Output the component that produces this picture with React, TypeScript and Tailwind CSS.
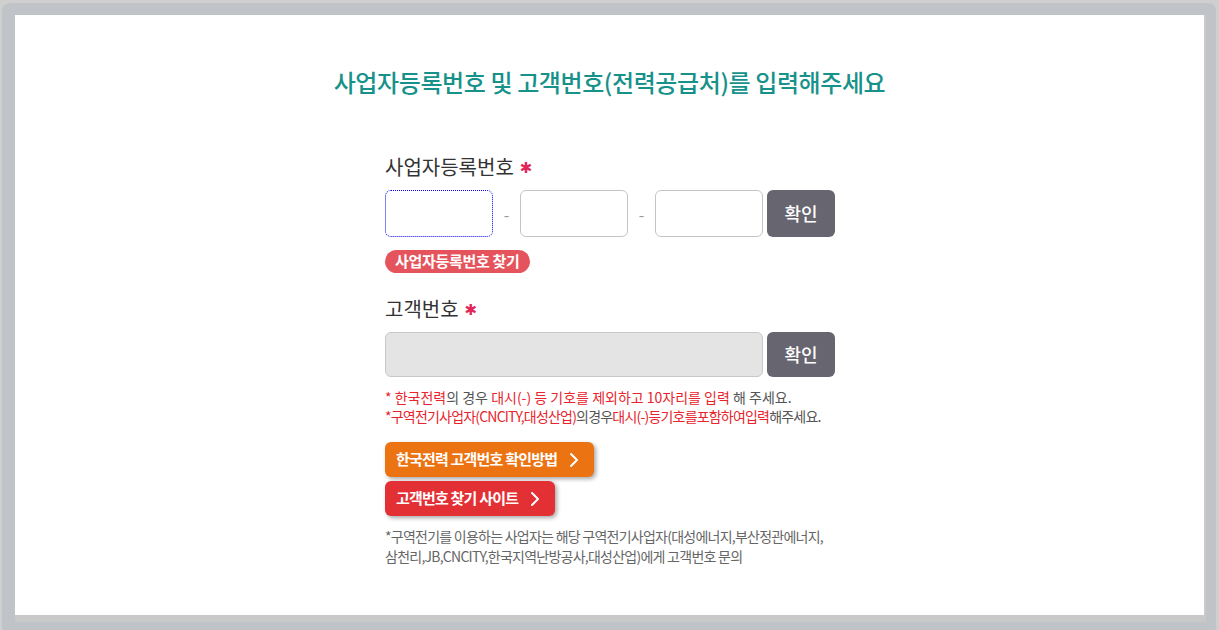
import React from 'react';

const font = { fontFamily: '"Noto Sans CJK KR", "Noto Sans", sans-serif' };

const Star = () => (
  <span className="ml-1.5 mt-[2px] text-[15px] font-bold text-[#e2265a]" style={{ fontFamily: '"DejaVu Sans", sans-serif' }}>
    ✱
  </span>
);

const Chevron = () => (
  <svg width="10" height="16" viewBox="0 0 10 16" className="ml-3">
    <path d="M2 2l6 6-6 6" fill="none" stroke="white" strokeWidth="2" strokeLinecap="round" strokeLinejoin="round" />
  </svg>
);

export default function App() {
  return (
    <div className="h-[630px] w-[1219px] overflow-hidden bg-[#cfcfcf] pl-[2px] pt-[3px] pr-[3px]" style={font}>
      <div className="h-[632px] rounded-lg bg-[#c0c3c7] pl-[13px] pt-[12px] pr-[10px]">
        <div className="h-[607px] border-r-2 border-b-[7px] border-[#c9c9c9] bg-white">
          <h1 className="pt-[49px] text-center text-[24px] leading-[36px] font-medium tracking-[-0.4px] text-[#16928a]">
            사업자등록번호 및 고객번호(전력공급처)를 입력해주세요
          </h1>

          <div className="ml-[370px] mt-[52px] w-[460px]">
            <div className="flex h-[30px] items-center text-[20px] text-[#333]">
              사업자등록번호
              <Star />
            </div>
            <div className="mt-[8px] flex items-center">
              <div className="h-[47px] w-[108px] rounded-md border border-dotted border-[#0000ee]" />
              <span className="w-[27px] text-center text-[#999]">-</span>
              <div className="h-[47px] w-[108px] rounded-md border border-[#c4c4c4]" />
              <span className="w-[27px] text-center text-[#999]">-</span>
              <div className="h-[47px] w-[108px] rounded-md border border-[#c4c4c4]" />
              <button className="ml-[4px] h-[47px] w-[68px] rounded-md bg-[#676570] text-[18px] font-medium text-white">확인</button>
            </div>
            <div className="mt-[13px] flex">
              <span className="inline-flex h-[23px] items-center rounded-full bg-[#e5545c] px-[10px] text-[15px] font-bold tracking-[-0.3px] text-white">
                사업자등록번호 찾기
              </span>
            </div>

            <div className="mt-[21px] flex h-[30px] items-center text-[20px] text-[#333]">
              고객번호
              <Star />
            </div>
            <div className="mt-[8px] flex items-center">
              <div className="h-[45px] w-[378px] rounded-md border border-[#c8c8c8] bg-[#e4e4e4]" />
              <button className="ml-[4px] h-[45px] w-[68px] rounded-md bg-[#676570] text-[18px] font-medium text-white">확인</button>
            </div>

            <div className="mt-[11px] text-[14px] leading-[19px] text-[#555]">
              <p className="tracking-[0px]">
                <span className="text-[#e8242c]">* 한국전력</span>의 경우 <span className="text-[#e8242c]">대시(-) 등 기호를 제외하고 10자리를 입력</span> 해 주세요.
              </p>
              <p className="tracking-[-0.8px]">
                <span className="text-[#e8242c]">*구역전기사업자(CNCITY,대성산업)</span>의경우<span className="text-[#e8242c]">대시(-)등기호를포함하여입력</span>해주세요.
              </p>
            </div>

            <div className="mt-[16px] flex flex-col items-start gap-[4px]">
              <button className="flex h-[35px] items-center rounded-md bg-[#ec7311] pl-[11px] pr-[15px] text-[15px] font-bold tracking-[-0.8px] text-white shadow-[2px_2px_4px_rgba(0,0,0,0.35)]">
                한국전력 고객번호 확인방법
                <Chevron />
              </button>
              <button className="flex h-[35px] items-center rounded-md bg-[#e33034] pl-[11px] pr-[15px] text-[15px] font-bold tracking-[-0.8px] text-white shadow-[2px_2px_4px_rgba(0,0,0,0.35)]">
                고객번호 찾기 사이트
                <Chevron />
              </button>
            </div>

            <p className="mt-[10px] w-[460px] text-[14px] leading-[20px] tracking-[-0.75px] text-[#666]">
              *구역전기를 이용하는 사업자는 해당 구역전기사업자(대성에너지,부산정관에너지,
              <br />
              삼천리,JB,CNCITY,한국지역난방공사,대성산업)에게 고객번호 문의
            </p>
          </div>
        </div>
      </div>
    </div>
  );
}
